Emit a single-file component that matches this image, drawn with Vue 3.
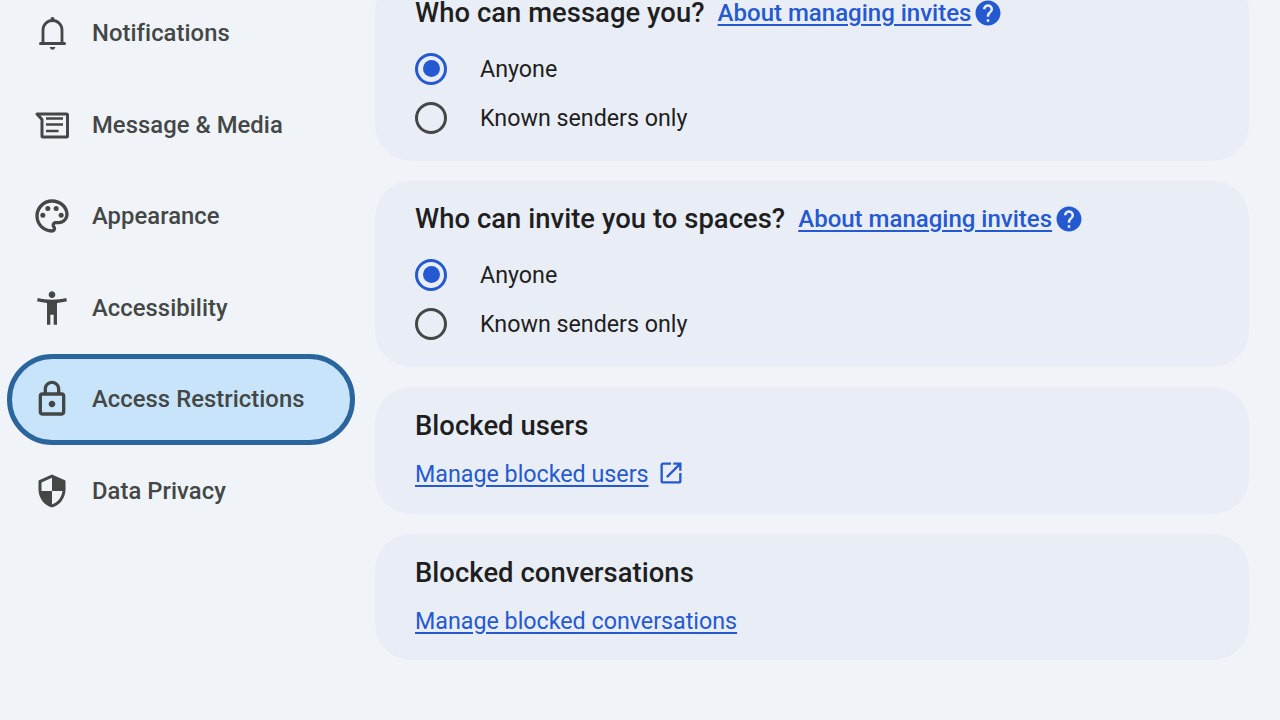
<script setup>
const nav = [
  { label: 'Notifications', key: 'bell' },
  { label: 'Message & Media', key: 'msg' },
  { label: 'Appearance', key: 'palette' },
  { label: 'Accessibility', key: 'access' },
  { label: 'Access Restrictions', key: 'lock', active: true },
  { label: 'Data Privacy', key: 'shield' },
]
const inviteCards = [
  { title: 'Who can message you?' },
  { title: 'Who can invite you to spaces?' },
]
</script>

<template>
  <div class="page">
    <nav class="side">
      <div v-for="n in nav" :key="n.key" class="item" :class="{ active: n.active }">
        <span class="ico">
          <svg v-if="n.key === 'bell'" width="40" height="40" viewBox="0 0 40 40" fill="none" stroke="#444746" stroke-width="2.800">
            <path d="M11 30V17a9.500 9.500 0 0 1 19 0V30" />
            <path d="M8.500 30.500H32.500" stroke-width="3" stroke-linecap="round" />
            <circle cx="20.500" cy="6" r="2" fill="#444746" stroke="none" />
            <path d="M17.500 34h6l-1.500 2.500h-3z" fill="#444746" stroke="none" />
          </svg>
          <svg v-else-if="n.key === 'msg'" width="40" height="40" viewBox="0 0 40 40" fill="none" stroke="#444746" stroke-width="3">
            <path d="M5 9H34.500a1 1 0 0 1 1 1V31a1 1 0 0 1-1 1H11a1 1 0 0 1-1-1V14.500z" fill="none" stroke-linejoin="round" />
            <path d="M14 13.500H31M14 19.500H31M14 26H26.500" stroke-width="2.700" />
          </svg>
          <svg v-else-if="n.key === 'palette'" width="40" height="40" viewBox="0 0 24 24" fill="#444746">
            <path d="M12 22C6.490 22 2 17.510 2 12S6.490 2 12 2s10 4.040 10 9c0 3.310-2.690 6-6 6h-1.770c-.28 0-.5.22-.5.5 0 .12.05.23.13.33.41.47.64 1.060.64 1.670 0 1.380-1.120 2.500-2.500 2.500zm0-18c-4.410 0-8 3.590-8 8s3.590 8 8 8c.28 0 .5-.22.5-.5 0-.16-.08-.28-.14-.35-.41-.46-.63-1.050-.63-1.650 0-1.380 1.120-2.500 2.500-2.500H16c2.210 0 4-1.790 4-4 0-3.860-3.590-7-8-7z" />
            <circle cx="6.500" cy="11.500" r="1.500" />
            <circle cx="9.500" cy="7.500" r="1.500" />
            <circle cx="14.500" cy="7.500" r="1.500" />
            <circle cx="17.500" cy="11.500" r="1.500" />
          </svg>
          <svg v-else-if="n.key === 'access'" width="40" height="40" viewBox="0 0 24 24" fill="#444746">
            <path d="M20.500 6c-2.610.7-5.670 1-8.500 1s-5.890-.3-8.500-1L3 8c1.860.5 4 .83 6 1v13h2v-6h2v6h2V9c2-.17 4.140-.5 6-1l-.5-2zM12 6c1.100 0 2-.9 2-2s-.9-2-2-2-2 .9-2 2 .9 2 2 2z" />
          </svg>
          <svg v-else-if="n.key === 'lock'" width="40" height="40" viewBox="0 0 24 24" fill="#444746">
            <path d="M18 8h-1V6c0-2.760-2.240-5-5-5S7 3.240 7 6v2H6c-1.100 0-2 .9-2 2v10c0 1.100.9 2 2 2h12c1.100 0 2-.9 2-2V10c0-1.100-.9-2-2-2zM9 6c0-1.660 1.340-3 3-3s3 1.340 3 3v2H9V6zm9 14H6V10h12v10zm-6-3c1.100 0 2-.9 2-2s-.9-2-2-2-2 .9-2 2 .9 2 2 2z" />
          </svg>
          <svg v-else width="36" height="36" viewBox="0 0 24 24" fill="#444746">
            <path d="M12 1L3 5v6c0 5.550 3.840 10.740 9 12 5.160-1.260 9-6.450 9-12V5l-9-4zm0 10.990h7c-.53 4.120-3.280 7.790-7 8.940V12H5V6.300l7-3.110v8.800z" />
          </svg>
        </span>
        <span class="label">{{ n.label }}</span>
      </div>
    </nav>

    <main class="content">
      <section v-for="c in inviteCards" :key="c.title" class="card invite">
        <div class="head">
          <h2>{{ c.title }}</h2>
          <a class="link about">About managing invites</a>
          <svg class="help" width="30" height="30" viewBox="0 0 24 24" fill="#2559d2">
            <path d="M12 2C6.480 2 2 6.480 2 12s4.480 10 10 10 10-4.480 10-10S17.520 2 12 2zm1 17h-2v-2h2v2zm2.070-7.750l-.9.92C13.450 12.900 13 13.500 13 15h-2v-.5c0-1.100.45-2.100 1.170-2.830l1.240-1.260c.37-.36.59-.86.59-1.410 0-1.100-.9-2-2-2s-2 .9-2 2H8c0-2.210 1.790-4 4-4s4 1.790 4 4c0 .88-.36 1.680-.93 2.250z" />
          </svg>
        </div>
        <div class="opt"><span class="radio on"></span><span>Anyone</span></div>
        <div class="opt"><span class="radio"></span><span>Known senders only</span></div>
      </section>

      <section class="card simple">
        <h2>Blocked users</h2>
        <div class="linkrow">
          <a class="link">Manage blocked users</a>
          <svg class="ext" width="28" height="28" viewBox="0 0 24 24" fill="#2559d2">
            <path d="M19 19H5V5h7V3H5c-1.110 0-2 .9-2 2v14c0 1.100.89 2 2 2h14c1.100 0 2-.9 2-2v-7h-2v7zM14 3v2h3.590l-9.830 9.830 1.410 1.410L19 6.410V10h2V3h-7z" />
          </svg>
        </div>
      </section>

      <section class="card simple">
        <h2>Blocked conversations</h2>
        <div class="linkrow">
          <a class="link">Manage blocked conversations</a>
        </div>
      </section>
    </main>
  </div>
</template>

<style>
html, body { margin: 0; background: #f0f4f9; overflow: hidden; }
</style>

<style scoped>
.page {
  width: 1280px;
  height: 720px;
  overflow: hidden;
  display: flex;
  background: #f0f4f9;
  font-family: Roboto, "Noto Sans", sans-serif;
}
.side {
  width: 375px;
  flex: none;
  margin-top: -12.750px;
  display: flex;
  flex-direction: column;
}
.item {
  height: 91.600px;
  box-sizing: border-box;
  display: flex;
  align-items: center;
  padding-left: 25px;
  gap: 20px;
  flex: none;
  width: 348px;
  margin-left: 7px;
  border-radius: 46px;
}
.item.active {
  background: #c7e4fb;
  border: 5px solid #2a659e;
  padding-left: 20px;
}
.ico {
  width: 40px;
  height: 40px;
  display: flex;
  align-items: center;
  justify-content: center;
  flex: none;
}
.label {
  font-size: 23.800px;
  font-weight: 500;
  letter-spacing: 0.050px;
  color: #444746;
}
.content {
  width: 874px;
  flex: none;
  margin-top: -25px;
  display: flex;
  flex-direction: column;
  gap: 20px;
}
.card {
  background: #e9eef6;
  border-radius: 36px;
  padding-left: 40px;
  box-sizing: border-box;
  color: #1f1f1f;
}
.invite { height: 186px; padding-top: 20px; }
.simple { height: 126.500px; padding-top: 21px; }
h2 {
  margin: 0;
  font-size: 27.400px;
  line-height: 36px;
  font-weight: 500;
  letter-spacing: 0.050px;
}
.head {
  display: flex;
  align-items: center;
  height: 36px;
  margin-bottom: 13px;
}
.link {
  color: #2559d2;
  font-size: 23.250px;
  line-height: 36px;
  text-decoration: underline;
  text-underline-offset: 3px;
}
.about { font-size: 24px; font-weight: 500; margin-left: 13px; }
.help { margin-left: 2px; }
.ext { margin-bottom: 2px; }
.opt {
  display: flex;
  align-items: center;
  gap: 33px;
  height: 49px;
  font-size: 23.250px;
}
.radio {
  width: 32px;
  height: 32px;
  box-sizing: border-box;
  border: 3.500px solid #444746;
  border-radius: 50%;
  position: relative;
  flex: none;
}
.radio.on { border-color: #2559d2; }
.radio.on::after {
  content: "";
  position: absolute;
  inset: 4.500px;
  border-radius: 50%;
  background: #2559d2;
}
.linkrow {
  display: flex;
  align-items: center;
  gap: 8px;
  height: 36px;
  margin-top: 12px;
}
</style>
